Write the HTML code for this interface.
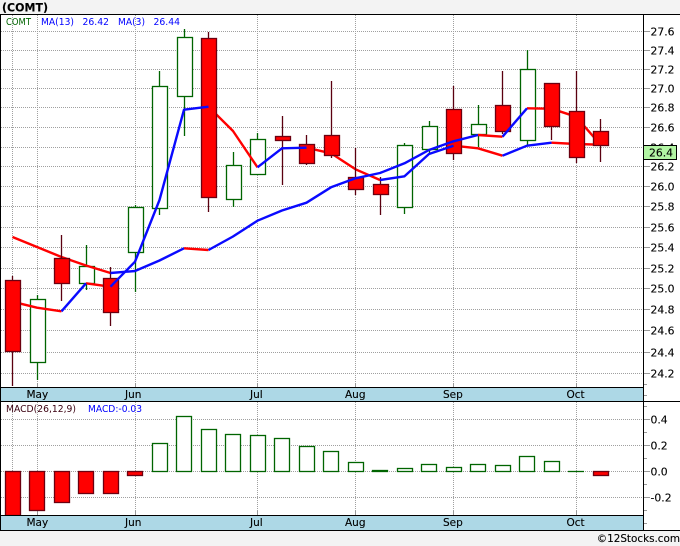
<!DOCTYPE html>
<html><head><meta charset="utf-8"><style>
html,body{margin:0;padding:0;background:#f3f3f3;width:680px;height:546px;overflow:hidden}
svg{display:block}
text{font-family:"DejaVu Sans",sans-serif;font-size:10.8px;fill:#000;stroke:#000;stroke-width:.12px}
.g{stroke:#a0a0a0;stroke-width:1;stroke-dasharray:1 1;fill:none}
.t{stroke:#999;stroke-width:1;fill:none}
.gc{stroke:#006400;stroke-width:1.3;fill:#fff}
.gw{stroke:#006400;stroke-width:1.3}
.rc{stroke:#6b0010;stroke-width:1.3;fill:#f00}
.rw{stroke:#5a0010;stroke-width:1.3}
.lr{stroke:#f00;stroke-width:2.4;fill:none;stroke-linejoin:round}
.lb{stroke:#0a0aff;stroke-width:2.4;fill:none;stroke-linejoin:round}
.leg{font-size:10px;stroke:none}
</style></head><body>
<svg width="680" height="546" viewBox="0 0 680 546" xmlns="http://www.w3.org/2000/svg">
<rect x="0" y="0" width="680" height="546" fill="#f3f3f3"/>
<rect x="0" y="14" width="680" height="516" fill="#fff"/>
<text x="2" y="11.5" textLength="46" lengthAdjust="spacingAndGlyphs" style="font-weight:bold;font-size:11.5px">(COMT)</text>

<!-- grid -->
<path class="g" d="M1 31.5H643M1 50.5H643M1 69.5H643M1 88.5H643M1 107.5H643M1 127.5H643M1 147.5H643M1 166.5H643M1 186.5H643M1 206.5H643M1 227.5H643M1 247.5H643M1 268.5H643M1 288.5H643M1 309.5H643M1 330.5H643M1 352.5H643M1 373.5H643M1 419.5H643M1 445.5H643M1 471.5H643M1 497.5H643"/>
<path class="g" d="M12.5 15V387M37.5 15V387M135.5 15V387M257.5 15V387M355.5 15V387M453.5 15V387M576.5 15V387M12.5 402V515M37.5 402V515M135.5 402V515M257.5 402V515M355.5 402V515M453.5 402V515M576.5 402V515"/>
<path class="t" d="M37.5 383V387M135.5 383V387M257.5 383V387M355.5 383V387M453.5 383V387M576.5 383V387M37.5 511V515M135.5 511V515M257.5 511V515M355.5 511V515M453.5 511V515M576.5 511V515"/>

<!-- green candles -->
<g>
<path class="gw" d="M37.5 295V380M86.5 245V290M135.5 205V292M159.5 71V215M184.5 29V136M233.5 152V207M257.5 133V174M404.5 143V214M429.5 121V153M478.5 105V147M527.5 50V145"/>
<rect class="gc" x="30.5" y="299.5" width="15" height="63"/>
<rect class="gc" x="79.5" y="266.5" width="15" height="17"/>
<rect class="gc" x="128.5" y="207.5" width="15" height="45"/>
<rect class="gc" x="152.5" y="86.5" width="15" height="122"/>
<rect class="gc" x="177.5" y="37.5" width="15" height="59"/>
<rect class="gc" x="226.5" y="165.5" width="15" height="34"/>
<rect class="gc" x="250.5" y="139.5" width="15" height="35"/>
<rect class="gc" x="397.5" y="145.5" width="15" height="62"/>
<rect class="gc" x="422.5" y="126.5" width="15" height="23"/>
<rect class="gc" x="471.5" y="124.5" width="15" height="10"/>
<rect class="gc" x="520.5" y="69.5" width="15" height="71"/>
</g>

<!-- red line segments -->
<polyline class="lr" points="12.5,237 37,247 61.5,257 86,265.5 110.5,273"/>
<polyline class="lr" points="184,248.3 208.5,250"/>
<polyline class="lr" points="478,135 502.5,136.7"/>
<polyline class="lr" points="527,108.3 551.5,108.7 576,116.7 600.5,144.7"/>
<polyline class="lr" points="12.5,301.7 37,307.7 61.5,311.3"/>
<polyline class="lr" points="86,283.3 110.5,286.7"/>
<polyline class="lr" points="208.5,106.7 233,131 257.5,167.3"/>
<polyline class="lr" points="306.5,147.7 331,153.3 355.5,169.3 380,180"/>
<polyline class="lr" points="453.5,145.7 478,148.3 502.5,155.7"/>
<polyline class="lr" points="551.5,142.7 576,144 600.5,144.7"/>

<!-- red candles -->
<g>
<path class="rw" d="M12.5 276V386M61.5 235V301M110.5 267V326M208.5 32V212M282.5 116V185M306.5 135V165M331.5 81V158M355.5 148V195M380.5 177V215M453.5 86V160M502.5 71V134M551.5 83V140M576.5 71V163M600.5 119V162"/>
<rect class="rc" x="5.5" y="280.5" width="15" height="71"/>
<rect class="rc" x="54.5" y="258.5" width="15" height="25"/>
<rect class="rc" x="103.5" y="278.5" width="15" height="34"/>
<rect class="rc" x="201.5" y="38.5" width="15" height="159"/>
<rect class="rc" x="275.5" y="136.5" width="15" height="4"/>
<rect class="rc" x="299.5" y="144.5" width="15" height="19"/>
<rect class="rc" x="324.5" y="135.5" width="15" height="20"/>
<rect class="rc" x="348.5" y="177.5" width="15" height="12"/>
<rect class="rc" x="373.5" y="184.5" width="15" height="10"/>
<rect class="rc" x="446.5" y="109.5" width="15" height="44"/>
<rect class="rc" x="495.5" y="105.5" width="15" height="26"/>
<rect class="rc" x="544.5" y="83.5" width="15" height="43"/>
<rect class="rc" x="569.5" y="111.5" width="15" height="46"/>
<rect class="rc" x="593.5" y="131.5" width="15" height="14"/>
</g>

<!-- blue line segments -->
<polyline class="lb" points="110.5,273 135,271 159.5,260.5 184,248.3"/>
<polyline class="lb" points="208.5,250 233,236.5 257.5,220.7 282,210.5 306.5,202.7 331,187.3 355.5,178.3 380,173 404.5,163.3 429,150 453.5,141.3 478,135"/>
<polyline class="lb" points="502.5,136.7 527,108.3"/>
<polyline class="lb" points="61.5,311.3 86,283.3"/>
<polyline class="lb" points="110.5,286.7 135,261.7 159.5,200 184,109.7 208.5,106.7"/>
<polyline class="lb" points="257.5,167.3 282,148.3 306.5,147.7"/>
<polyline class="lb" points="380,180 404.5,176.3 429,154 453.5,145.7"/>
<polyline class="lb" points="502.5,155.7 527,145.7 551.5,142.7"/>

<!-- MACD bars -->
<g>
<rect class="rc" x="5.5" y="471.5" width="15" height="44"/>
<rect class="rc" x="29.5" y="471.5" width="15" height="39"/>
<rect class="rc" x="54.5" y="471.5" width="15" height="31"/>
<rect class="rc" x="78.5" y="471.5" width="15" height="22"/>
<rect class="rc" x="103.5" y="471.5" width="15" height="22"/>
<rect class="rc" x="127.5" y="471.5" width="15" height="4"/>
<rect class="rc" x="593.5" y="471.5" width="15" height="4"/>
<rect class="gc" x="152.5" y="443.5" width="15" height="28"/>
<rect class="gc" x="176.5" y="416.5" width="15" height="55"/>
<rect class="gc" x="201.5" y="429.5" width="15" height="42"/>
<rect class="gc" x="225.5" y="434.5" width="15" height="37"/>
<rect class="gc" x="250.5" y="435.5" width="15" height="36"/>
<rect class="gc" x="274.5" y="438.5" width="15" height="33"/>
<rect class="gc" x="299.5" y="446.5" width="15" height="25"/>
<rect class="gc" x="323.5" y="451.5" width="15" height="20"/>
<rect class="gc" x="348.5" y="462.5" width="15" height="9"/>
<rect class="gc" x="372.5" y="470.5" width="15" height="1"/>
<rect class="gc" x="397.5" y="468.5" width="15" height="3"/>
<rect class="gc" x="421.5" y="464.5" width="15" height="7"/>
<rect class="gc" x="446.5" y="467.5" width="15" height="4"/>
<rect class="gc" x="470.5" y="464.5" width="15" height="7"/>
<rect class="gc" x="495.5" y="465.5" width="15" height="6"/>
<rect class="gc" x="519.5" y="456.5" width="15" height="15"/>
<rect class="gc" x="544.5" y="461.5" width="15" height="10"/>
<path class="gw" d="M568 471.5H584"/>
</g>

<!-- bands -->
<rect x="1" y="387" width="642" height="14" fill="#add8e6"/>
<rect x="1" y="515" width="642" height="15" fill="#add8e6"/>

<!-- frame -->
<path d="M0 14.5H680M0 401.5H680M0 530.5H680" stroke="#000" stroke-width="1" fill="none"/>
<path d="M0 387.5H643M0 515.5H643" stroke="#000" stroke-width="1" fill="none"/>
<path d="M0.5 14V531M643.5 14V531" stroke="#000" stroke-width="1" fill="none"/>

<!-- right ticks -->
<path class="t" d="M644 31.5H650M644 50.5H650M644 69.5H650M644 88.5H650M644 107.5H650M644 127.5H650M644 147.5H650M644 166.5H650M644 186.5H650M644 206.5H650M644 227.5H650M644 247.5H650M644 268.5H650M644 288.5H650M644 309.5H650M644 330.5H650M644 352.5H650M644 373.5H650M644 419.5H650M644 445.5H650M644 471.5H650M644 497.5H650"/>
<path class="t" d="M644 384.5H647M644 395.5H647M644 406.5H647M644 432.5H647M644 458.5H647M644 484.5H647M644 510.5H647M644 523.5H647"/>

<!-- axis labels -->
<g>
<text x="650.5" y="35.5">27.6</text>
<text x="650.5" y="54.5">27.4</text>
<text x="650.5" y="73.5">27.2</text>
<text x="650.5" y="92.5">27.0</text>
<text x="650.5" y="111.5">26.8</text>
<text x="650.5" y="131.5">26.6</text>
<text x="650.5" y="151.5">26.4</text>
<text x="650.5" y="170.5">26.2</text>
<text x="650.5" y="190.5">26.0</text>
<text x="650.5" y="210.5">25.8</text>
<text x="650.5" y="231.5">25.6</text>
<text x="650.5" y="251.5">25.4</text>
<text x="650.5" y="272.5">25.2</text>
<text x="650.5" y="292.5">25.0</text>
<text x="650.5" y="313.5">24.8</text>
<text x="650.5" y="334.5">24.6</text>
<text x="650.5" y="356.5">24.4</text>
<text x="650.5" y="377.5">24.2</text>
<text x="650.5" y="423.5">0.4</text>
<text x="650.5" y="449.5">0.2</text>
<text x="650.5" y="475.5">0.0</text>
<text x="650.5" y="501.5">-0.2</text>
</g>

<!-- price box -->
<rect x="643.5" y="145.5" width="33" height="14" fill="#b2f5a4" stroke="#000" stroke-width="1"/>
<text x="649" y="156.5">26.4</text>

<!-- legends -->
<text class="leg" x="6" y="25" textLength="25" lengthAdjust="spacingAndGlyphs" style="fill:#006400">COMT</text>
<text class="leg" x="41" y="25" textLength="33" lengthAdjust="spacingAndGlyphs" style="fill:#0000ff">MA(13)</text>
<text class="leg" x="82.5" y="25" textLength="26.5" lengthAdjust="spacingAndGlyphs" style="fill:#0000ff">26.42</text>
<text class="leg" x="118" y="25" textLength="27" lengthAdjust="spacingAndGlyphs" style="fill:#0000ff">MA(3)</text>
<text class="leg" x="153.5" y="25" textLength="26.5" lengthAdjust="spacingAndGlyphs" style="fill:#0000ff">26.44</text>
<text class="leg" x="6" y="412" textLength="70" lengthAdjust="spacingAndGlyphs" style="fill:#3a0010">MACD(26,12,9)</text>
<text class="leg" x="88" y="412" textLength="54" lengthAdjust="spacingAndGlyphs" style="fill:#0000ff">MACD:-0.03</text>

<!-- months -->
<g>
<text x="26.5" y="398" style="font-size:10.5px">May</text>
<text x="125" y="398" style="font-size:10.5px">Jun</text>
<text x="250" y="398" style="font-size:10.5px">Jul</text>
<text x="345" y="398" style="font-size:10.5px">Aug</text>
<text x="443" y="398" style="font-size:10.5px">Sep</text>
<text x="566.5" y="398" style="font-size:10.5px">Oct</text>
<text x="26.5" y="526" style="font-size:10.5px">May</text>
<text x="125" y="526" style="font-size:10.5px">Jun</text>
<text x="250" y="526" style="font-size:10.5px">Jul</text>
<text x="345" y="526" style="font-size:10.5px">Aug</text>
<text x="443" y="526" style="font-size:10.5px">Sep</text>
<text x="566.5" y="526" style="font-size:10.5px">Oct</text>
</g>

<text x="680" y="542" text-anchor="end" style="font-size:10.4px">©12Stocks.com</text>
</svg>
</body></html>
